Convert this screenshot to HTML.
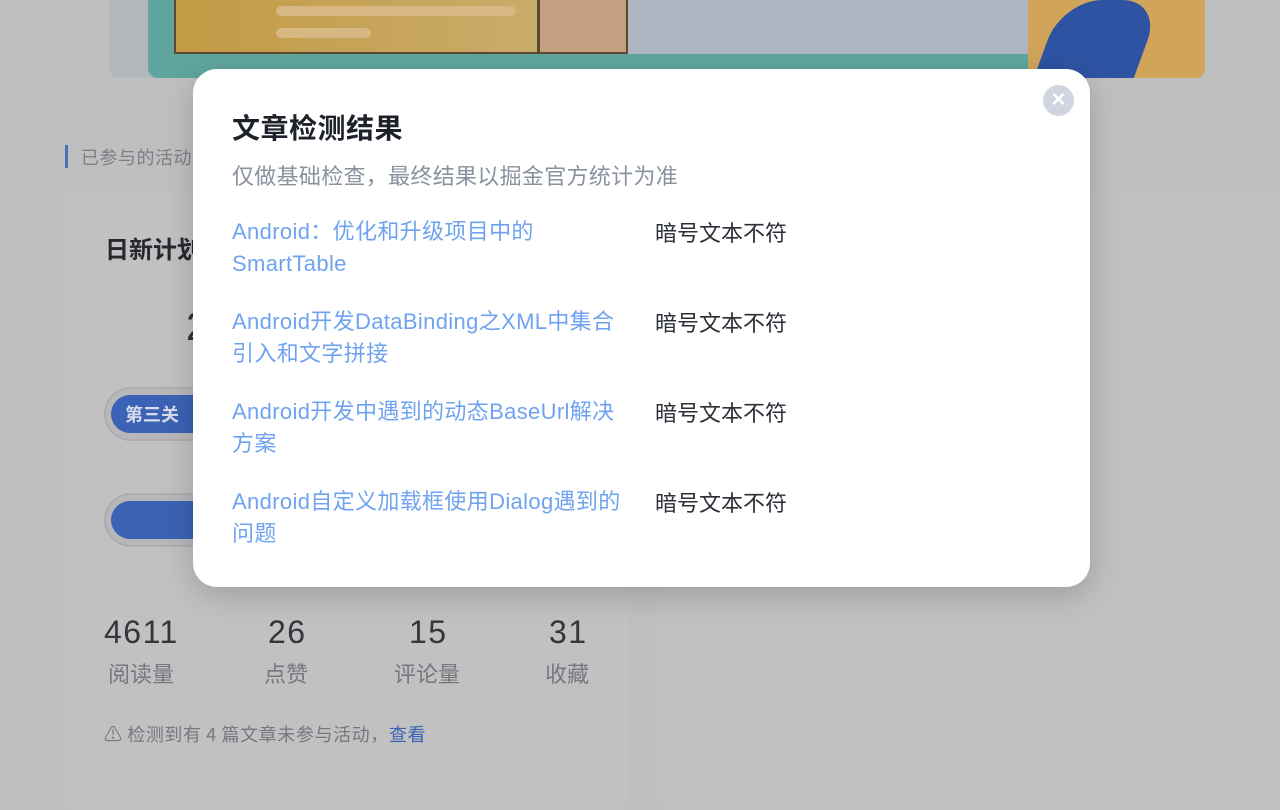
<!DOCTYPE html>
<html><head><meta charset="utf-8"><style>
*{margin:0;padding:0;box-sizing:border-box}
body{width:1280px;height:800px;overflow:hidden;background:#bfbfbf;font-family:"Liberation Sans","Noto Sans CJK SC",sans-serif;position:relative}
.abs{position:absolute}
.cn{font-family:"Noto Sans CJK SC",sans-serif}
.lk{font-size:22px;line-height:32px;color:#6fa3ef;letter-spacing:0.35px}
.st{font-size:32px;color:#33363d;letter-spacing:1.5px}
</style></head><body>
<!-- banner -->
<div class="abs" style="left:110px;top:-10px;width:1095px;height:88px;background:#b3b6bb;border-radius:8px"></div>
<div class="abs" style="left:148px;top:-10px;width:1057px;height:88px;background:#5fa59e;border-radius:10px;overflow:hidden">
  <div class="abs" style="left:26px;top:0;width:365px;height:64px;background:linear-gradient(90deg,#c39a45,#c9ad6a);border:2px solid #5a4a30"></div>
  <div class="abs" style="left:128px;top:16px;width:240px;height:10px;border-radius:5px;background:#d8b882"></div>
  <div class="abs" style="left:128px;top:38px;width:95px;height:10px;border-radius:5px;background:#d8b882"></div>
  <div class="abs" style="left:390px;top:0;width:90px;height:64px;background:#c2a080;border:2px solid #5a4a30"></div>
  <div class="abs" style="left:480px;top:0;width:577px;height:64px;background:#aeb6c2"></div>
  <div class="abs" style="left:880px;top:0;width:177px;height:88px;background:linear-gradient(160deg,#cfa45a,#d2a45a)"></div>
  <div class="abs" style="left:900px;top:10px;width:100px;height:78px;background:#2e53a3;border-radius:40px 40px 0 0;transform:skewX(-20deg)"></div>
</div>
<!-- section title -->
<div class="abs" style="left:65px;top:145px;width:3px;height:23px;background:#4a70b5"></div>
<div class="abs cn" style="left:81px;top:144px;font-size:18px;color:#7b7f87;letter-spacing:0.5px">已参与的活动</div>
<!-- cards -->
<div class="abs" style="left:65px;top:190px;width:563px;height:620px;background:#c1c1c2;border-radius:10px"></div>
<div class="abs" style="left:658px;top:190px;width:640px;height:620px;background:#c0c0c0;border-radius:10px"></div>
<div class="abs cn" style="left:105px;top:230px;font-size:24px;font-weight:bold;color:#25282e">日新计划</div>
<div class="abs" style="left:186px;top:305px;font-size:40px;color:#2f3238">2</div>
<div class="abs" style="left:104px;top:387px;width:200px;height:54px;border-radius:27px;background:#b8b8ba;border:2px solid #adadaf"></div>
<div class="abs cn" style="left:111px;top:395px;width:110px;height:38px;border-radius:19px;background:#3b62b4;color:#d6dcec;font-size:18px;font-weight:bold;padding:6px 14px">第三关</div>
<div class="abs" style="left:104px;top:493px;width:200px;height:54px;border-radius:27px;background:#b8b8ba;border:2px solid #adadaf"></div>
<div class="abs" style="left:111px;top:501px;width:200px;height:38px;border-radius:19px;background:#3b62b4"></div>
<div class="abs st" style="left:104px;top:614px">4611</div>
<div class="abs st" style="left:268px;top:614px">26</div>
<div class="abs st" style="left:409px;top:614px">15</div>
<div class="abs st" style="left:549px;top:614px">31</div>
<div class="abs cn" style="left:108px;top:657px;font-size:22px;color:#75787f">阅读量</div>
<div class="abs cn" style="left:264px;top:657px;font-size:22px;color:#75787f">点赞</div>
<div class="abs cn" style="left:394px;top:657px;font-size:22px;color:#75787f">评论量</div>
<div class="abs cn" style="left:545px;top:657px;font-size:22px;color:#75787f">收藏</div>
<div class="abs cn" style="left:104px;top:721px;font-size:18px;color:#75787f;letter-spacing:0.6px">⚠ 检测到有 4 篇文章未参与活动，<span style="color:#3b62b4">查看</span></div>
<!-- modal -->
<div class="abs" style="left:193px;top:69px;width:897px;height:518px;background:#fff;border-radius:24px;box-shadow:0 8px 30px rgba(0,0,0,.18)">
  <div class="abs" style="left:850px;top:16px;width:31px;height:31px;border-radius:50%;background:#d0d5df;color:#fff;font-size:24px;font-weight:bold;text-align:center;line-height:30px">×</div>
  <div class="abs cn" style="left:39px;top:38px;font-size:28px;font-weight:bold;color:#1d2129;line-height:40px;letter-spacing:0.5px">文章检测结果</div>
  <div class="abs cn" style="left:39px;top:90px;font-size:22px;color:#8a919f;line-height:32px;letter-spacing:0.3px">仅做基础检查，最终结果以掘金官方统计为准</div>
  <div class="abs lk" style="left:39px;top:147px;width:420px">Android：优化和升级项目中的<br>SmartTable</div>
  <div class="abs lk" style="left:39px;top:237px;width:420px">Android开发DataBinding之XML中集合<br>引入和文字拼接</div>
  <div class="abs lk" style="left:39px;top:327px;width:420px">Android开发中遇到的动态BaseUrl解决<br>方案</div>
  <div class="abs lk" style="left:39px;top:417px;width:420px">Android自定义加载框使用Dialog遇到的<br>问题</div>
  <div class="abs cn" style="left:462px;top:147px;font-size:22px;line-height:32px;color:#2b2f36">暗号文本不符</div>
  <div class="abs cn" style="left:462px;top:237px;font-size:22px;line-height:32px;color:#2b2f36">暗号文本不符</div>
  <div class="abs cn" style="left:462px;top:327px;font-size:22px;line-height:32px;color:#2b2f36">暗号文本不符</div>
  <div class="abs cn" style="left:462px;top:417px;font-size:22px;line-height:32px;color:#2b2f36">暗号文本不符</div>
</div>
</body></html>
